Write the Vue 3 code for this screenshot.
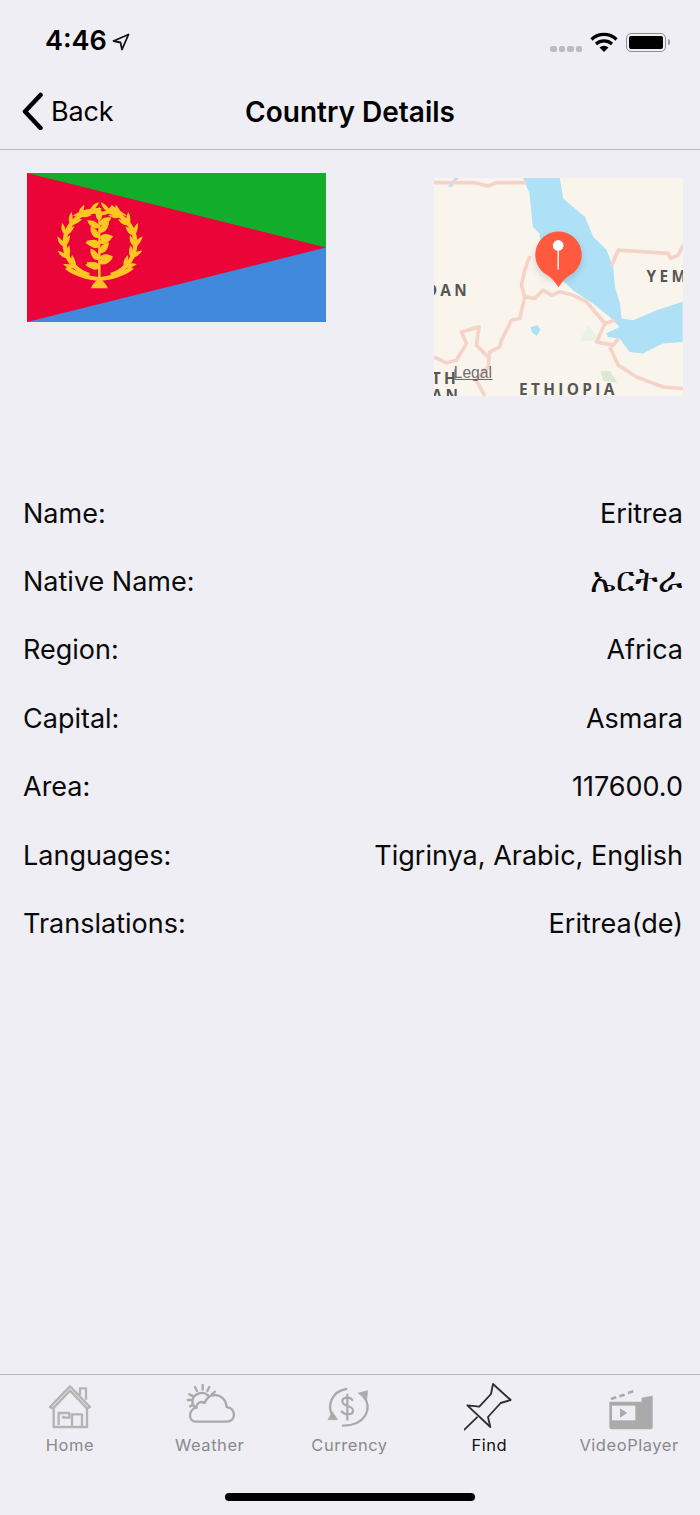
<script setup>
const rows = [
  ['Name:', 'Eritrea'],
  ['Native Name:', 'ኤርትራ'],
  ['Region:', 'Africa'],
  ['Capital:', 'Asmara'],
  ['Area:', '117600.0'],
  ['Languages:', 'Tigrinya, Arabic, English'],
  ['Translations:', 'Eritrea(de)'],
]
const leaves = []
let leftArc = ''
let rightArc = ''
const cx = 150, cy = 130, rx = 106, ry = 100
for (const side of [-1, 1]) {
  let d = ''
  for (let deg = 18; deg <= 165; deg += 7) {
    const t = deg * Math.PI / 180
    d += (d ? 'L' : 'M') + (cx + side * rx * Math.sin(t)).toFixed(1) + ' ' + (cy + ry * Math.cos(t)).toFixed(1)
  }
  if (side < 0) leftArc = d
  else rightArc = d
  for (let deg = 44; deg <= 165; deg += 20) {
    const t = deg * Math.PI / 180
    const x = cx + side * rx * Math.sin(t)
    const y = cy + ry * Math.cos(t)
    const dir = Math.atan2(-Math.sin(t), side * Math.cos(t)) * 180 / Math.PI
    for (const off of [-30, 30]) {
      leaves.push(`translate(${x.toFixed(1)} ${y.toFixed(1)}) rotate(${(dir + off).toFixed(1)})`)
    }
  }
}
const sprigs = [
  'translate(148 205) rotate(-155)', 'translate(148 195) rotate(-180)', 'translate(146 180) rotate(-125)',
  'translate(148 190) rotate(-20)', 'translate(148 175) rotate(-5)', 'translate(150 160) rotate(-50)',
  'translate(148 140) rotate(-155)', 'translate(148 128) rotate(-180)', 'translate(146 114) rotate(-125)',
  'translate(148 130) rotate(-25)', 'translate(148 114) rotate(-5)', 'translate(150 98) rotate(-50)',
  'translate(148 82) rotate(-150)', 'translate(148 74) rotate(-30)', 'translate(148 62) rotate(-90)',
]
</script>

<template>
  <div class="screen">
    <div class="status">
      <div class="time">4:46
        <svg class="arrow" viewBox="0 0 18 18" width="18" height="18"><path d="M16.500 1.500 1.500 8l7 1.500 1.500 7z" fill="none" stroke="#111" stroke-width="1.800" stroke-linejoin="round"/></svg>
      </div>
      <div class="indicators">
        <span class="dots"><i></i><i></i><i></i><i></i></span>
        <svg viewBox="0 0 28 20" width="28" height="20"><path d="M1.500 7.500a18 18 0 0 1 25 0M6 12a12 12 0 0 1 16 0" fill="none" stroke="#000" stroke-width="3.200"/><path d="M14 20 9.500 15.500a6.500 6.500 0 0 1 9 0z" fill="#000"/></svg>
        <span class="battery"><b></b></span>
      </div>
    </div>
    <header class="nav">
      <div class="back">
        <svg viewBox="0 0 24 38" width="24" height="38"><path d="M20.500 3 5 19.500 20.500 36" fill="none" stroke="#000" stroke-width="4.500" stroke-linecap="round" stroke-linejoin="round"/></svg>
        <span>Back</span>
      </div>
      <h1>Country Details</h1>
    </header>

    <main class="content">
      <section class="media">
        <svg class="flag" viewBox="0 0 299 149" width="299" height="149">
          <rect width="299" height="75" fill="#12ad2b"/>
          <rect y="74" width="299" height="75" fill="#4189dd"/>
          <path d="M0 0 299 74.500 0 149z" fill="#ea0437"/>
          <g transform="translate(23 27) scale(.3333)" fill="#ffc524">
            <path :d="leftArc" fill="none" stroke="#ffc524" stroke-width="13" stroke-linejoin="round"/>
            <path :d="rightArc" fill="none" stroke="#ffc524" stroke-width="13" stroke-linejoin="round"/>
            <path v-for="(l, i) in leaves" :key="i" :transform="l" d="M0 0C8-9 24-10 38 0 24 6 8 6 0 0z"/>
            <path d="M68 48c25-20 55-24 88-24-14 14-45 30-88 24zM232 50c-18-8-50-8-78-10 10-6 22-10 32-26 10 12 34 20 46 36z"/>
            <path d="M145 60h6l1 180h-8z"/>
            <path d="M123 265c3-12 15-22 25-30 10 8 22 18 25 30z"/>
            <path d="M148 242C110 242 70 227 45 207l10-8c25 18 60 30 93 32 33-2 68-14 93-32l10 8c-25 20-65 35-103 35z"/>
            <path v-for="(s, i) in sprigs" :key="'s' + i" :transform="s" d="M0 0C6-13 26-15 42 0 26 12 6 11 0 0z"/>
          </g>
        </svg>
        <div class="map">
          <svg viewBox="13 24 746 653" width="249" height="218">
            <defs>
              <filter id="pinshadow" x="-50%" y="-50%" width="200%" height="200%"><feGaussianBlur stdDeviation="12"/></filter>
              <clipPath id="mapclip"><rect x="13" y="24" width="746" height="653"/></clipPath>
            </defs>
            <g clip-path="url(#mapclip)">
              <rect x="13" y="24" width="746" height="653" fill="#f9f5ed"/>
              <path fill="#aee0f6" d="M280 24H390l10 61 65 55 25 60 40 40 20 50 5 60 15 50 5 45 35 5 70-30 78-25V515l-59 5-60 30-40-5-30-40-35-5-5-10 40-20-30-30-50-40-60-40-20-20-30-20-40-50-10-80-20-20-10-100zM303 470l20-6 9 15-12 18-14-12zM55 50l20-26h14l-14 12-8 14z"/>
              <g><path fill="#edf1e4" d="M450 512l25-48 25 32-5 14z"/><path fill="#d9e9d2" d="M512 602h28l22 35-42-6z"/></g>
              <g fill="none" stroke-linejoin="round" stroke="#f6d3c8" stroke-width="11">
                <path d="M13 38H135l40 10 25-10h90"/>
                <path d="M545 287l20-47 150 10 7 15 23-10 14-30"/>
                <path d="M300 257l-15 43-10 45 10 35 30 5 25-25 25 15 25-10 40 10 40 20 55 65 30-10"/>
                <path d="M285 380l-15 65-25 5-30 60-5 20-30 15-5 45-35 40 25 47"/>
                <path d="M13 560l37 18 30-8 30-50-15-35 53-15-8 55 40 40"/>
                <path d="M525 460l-25 55 50 10 15-20M540 530l25 55 55 35 80 30 59 5"/>
              </g>
              <g class="maplabel">
                <text x="-12" y="376">DAN</text>
                <text x="650" y="335">YEM</text>
                <text x="6" y="640">TH</text>
                <text x="6" y="691">AN</text>
                <text x="268" y="675">ETHIOPIA</text>
              </g>
              <text x="72" y="622" class="legal">Legal</text>
              <path d="M76 628H188M76 596v32" stroke="#666" stroke-width="3" fill="none"/>
              <circle cx="386" cy="265" r="66" fill="#000" opacity=".18" filter="url(#pinshadow)"/>
              <path d="M386 184a70 70 0 0 1 32 132q-14 8-32 35-18-27-32-35a70 70 0 0 1 32-132z" fill="#ff5a3f"/>
              <path d="M385 236v62" stroke="#fff" stroke-width="4"/>
              <circle cx="385" cy="226" r="16" fill="#fff"/>
            </g>
          </svg>
        </div>
      </section>

      <section class="rows">
        <div v-for="(r, i) in rows" :key="r[0]" class="row">
          <span>{{ r[0] }}</span>
          <span :class="{ ethi: i === 1 }">{{ r[1] }}</span>
        </div>
      </section>
    </main>

    <footer class="tabbar">
      <div class="tabs">
        <div class="tab">
          <svg viewBox="135 48 150 150" width="50" height="50"><g fill="none" stroke="#b4b4b4" stroke-width="7" stroke-linejoin="round"><path d="M150 126l60-62 60 62-9 4-51-53-51 53z"/><path d="M240 90V70h18v34"/><path d="M161 128v58h100v-58"/><path d="M216 186v-38h30v38M176 180v-36h32v14h-18v-6"/></g></svg>
          <span>Home</span>
        </div>
        <div class="tab">
          <svg viewBox="555 48 150 150" width="50" height="50"><g fill="none" stroke="#aaa" stroke-width="7" stroke-linecap="round" stroke-linejoin="round"><path d="M585 170h95c30 0 28-42 0-44-2-24-22-42-46-34-8 3-16 12-20 22-12-8-26 2-24 14-22 2-28 38-5 42z"/><path d="M587 128c-14-8-14-34 8-42 10-4 22-2 30 6"/><path d="M608 60v14M585 66l6 12M568 88l12 6M563 105h14M570 124l10-5M628 66l-6 12M645 80l-10 8"/></g></svg>
          <span>Weather</span>
        </div>
        <div class="tab">
          <svg viewBox="15 9 150 150" width="50" height="50"><g fill="none" stroke="#aaa" stroke-width="7" stroke-linecap="round"><path d="M42 115C22 85 38 40 82 33"/><path d="M134 55c28 38 4 88-62 88"/><path d="M28 125h28L40 102zM118 45l28-7-3 28z" fill="#aaa" stroke-width="2" stroke-linejoin="round"/><path d="M100 66c-6-10-30-10-30 4 0 18 32 10 32 28 0 14-26 14-34 2M85 50v75" stroke-width="6.500"/></g></svg>
          <span>Currency</span>
        </div>
        <div class="tab active">
          <svg viewBox="345 48 150 150" width="50" height="50"><g fill="none" stroke="#2e2e2e" stroke-width="5.500" stroke-linejoin="round" stroke-linecap="round"><path d="M432 57l53 48-30 9-38 42 7 30-69-65 36 4 35-38z"/><path d="M346 194l38-37"/></g></svg>
          <span>Find</span>
        </div>
        <div class="tab">
          <svg viewBox="12 -12 150 150" width="50" height="50"><path d="M28 50v75q0 8 8 8h114q8 0 8-8V32l-33 6v12z" fill="#aaa"/><rect x="36" y="62" width="70" height="44" fill="#efeef4"/><path d="M60 70l22 14-22 14z" fill="#aaa"/><path d="M33 42l16-5M58 34l16-5M84 24l16-5" stroke="#aaa" stroke-width="8"/></svg>
          <span>VideoPlayer</span>
        </div>
      </div>
      <div class="home-bar"></div>
    </footer>
  </div>
</template>

<style scoped>
.screen {
  width: 700px;
  height: 1515px;
  background: #efeef4;
  display: flex;
  flex-direction: column;
  font-family: Inter, Roboto, "Noto Sans", "DejaVu Sans", sans-serif;
  color: #000;
  overflow: hidden;
}
.status {
  height: 80px;
  box-sizing: border-box;
  padding: 24px 34px 0 45px;
  display: flex;
  justify-content: space-between;
  align-items: flex-start;
}
.time {
  font-size: 27px;
  font-weight: 600;
  line-height: 34px;
  display: flex;
  align-items: center;
  gap: 5px;
}
.arrow { margin-top: 1px; }
.indicators { display: flex; align-items: center; gap: 8px; margin-top: 8px; }
.dots { display: flex; gap: 2px; margin-top: 13px; }
.dots i { width: 6.500px; height: 6px; border-radius: 2px; background: #bdbdbd; }
.battery {
  width: 34px;
  height: 13px;
  border: 1.500px solid #8e8e8e;
  border-radius: 5px;
  padding: 2px;
  display: block;
  position: relative;
}
.battery::after {
  content: "";
  position: absolute;
  right: -5px;
  top: 5px;
  width: 2px;
  height: 6px;
  border-radius: 0 2px 2px 0;
  background: #9a9a9a;
}
.battery b { display: block; width: 100%; height: 100%; background: #000; border-radius: 2px; }
.nav {
  height: 70px;
  box-sizing: border-box;
  border-bottom: 1px solid #b9b9bb;
  position: relative;
  display: flex;
  align-items: center;
  justify-content: center;
}
.back {
  position: absolute;
  left: 20px;
  top: 12px;
  display: flex;
  align-items: center;
  gap: 7px;
  font-size: 27px;
  letter-spacing: -.2px;
}
h1 {
  margin: 0 0 6px;
  font-size: 28px;
  font-weight: 600;
}
.content { flex: 1; }
.media {
  display: flex;
  justify-content: space-between;
  align-items: flex-start;
  padding: 23px 17px 0 27px;
}
.map { margin-top: 5px; height: 218px; }
.map svg, .flag { display: block; }
.maplabel {
  font-family: "Open Sans", "Liberation Sans", sans-serif;
  font-weight: 700;
  font-size: 46px;
  letter-spacing: 10px;
  fill: #565656;
}
.legal { font-family: "Liberation Sans", sans-serif; font-size: 47px; fill: #6e6e6e; }
.rows { margin-top: 83px; padding: 0 17px 0 23px; }
.row {
  height: 68.400px;
  display: flex;
  justify-content: space-between;
  align-items: center;
  font-size: 27px;
  color: #0a0a0a;
}
.ethi { font-size: 34px; margin: 0 1px 6px 0; }
.tabbar {
  height: 141px;
  box-sizing: border-box;
  border-top: 1px solid #b9b9bb;
  position: relative;
}
.tabs { display: grid; grid-template-columns: repeat(5, 1fr); padding: 6px 1px 0 0; }
.tab {
  display: flex;
  flex-direction: column;
  align-items: center;
  font-size: 16.500px;
  font-weight: 400;
  color: #8a8a8a;
  letter-spacing: .55px;
  line-height: 20px;
}
.tab svg { display: block; margin-bottom: 4px; }
.tab.active { color: #111; }
.home-bar {
  position: absolute;
  left: 225px;
  bottom: 14px;
  width: 250px;
  height: 8px;
  border-radius: 4px;
  background: #000;
}
</style>
